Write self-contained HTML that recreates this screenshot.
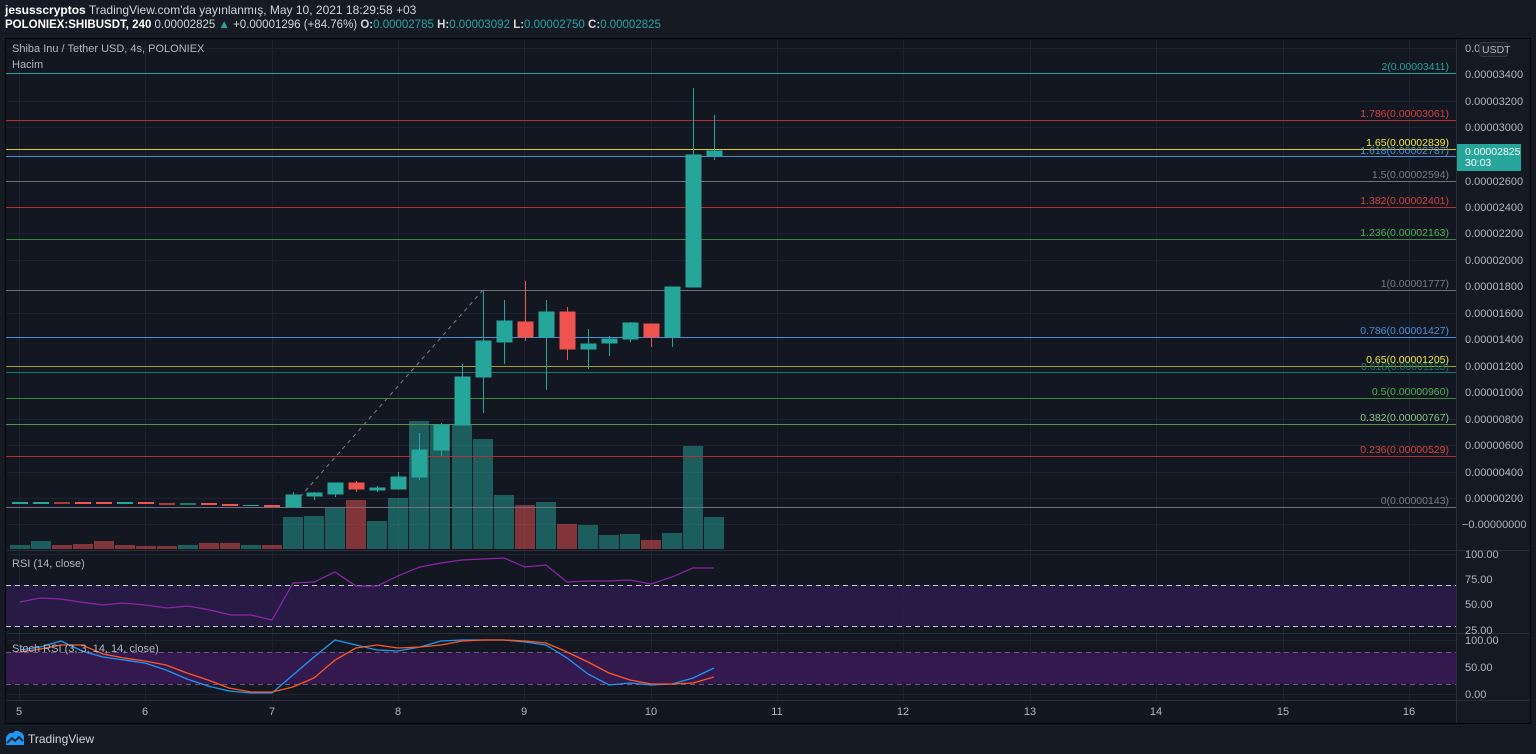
<!DOCTYPE html>
<html><head><meta charset="utf-8"><style>
html,body{margin:0;padding:0;background:#161a25;width:1536px;height:754px;overflow:hidden}
svg{display:block;font-family:"Liberation Sans",sans-serif}
</style></head><body>
<svg width="1536" height="754" xmlns="http://www.w3.org/2000/svg">
<rect width="1536" height="754" fill="#161a25"/>
<text x="5" y="14" font-size="12" fill="#d1d4dc"><tspan font-weight="bold" fill="#fff">jesusscryptos</tspan> TradingView.com'da yayınlanmış, May 10, 2021 18:29:58 +03</text>
<text x="5" y="28" font-size="11.5" fill="#d1d4dc"><tspan font-weight="bold" fill="#fff">POLONIEX:SHIBUSDT, 240</tspan> 0.00002825 <tspan fill="#26a69a">▲</tspan> +0.00001296 (+84.76%) <tspan font-weight="bold">O:</tspan><tspan fill="#26a69a">0.00002785</tspan> <tspan font-weight="bold">H:</tspan><tspan fill="#26a69a">0.00003092</tspan> <tspan font-weight="bold">L:</tspan><tspan fill="#26a69a">0.00002750</tspan> <tspan font-weight="bold">C:</tspan><tspan fill="#26a69a">0.00002825</tspan></text>
<!-- frame -->
<rect x="5.5" y="38.5" width="1525" height="685" fill="#131722" stroke="#000" stroke-width="1"/>
<rect x="1457" y="39" width="73" height="684" fill="#151924"/>
<line x1="1456.5" y1="39" x2="1456.5" y2="723" stroke="#2a2e39"/>
<!-- grid verticals -->
<g stroke="#1e222d" stroke-width="1">
<line x1="19.5" y1="39" x2="19.5" y2="700"/><line x1="145.5" y1="39" x2="145.5" y2="700"/><line x1="272.5" y1="39" x2="272.5" y2="700"/><line x1="398.5" y1="39" x2="398.5" y2="700"/><line x1="524.5" y1="39" x2="524.5" y2="700"/><line x1="651.5" y1="39" x2="651.5" y2="700"/><line x1="777.5" y1="39" x2="777.5" y2="700"/><line x1="903.5" y1="39" x2="903.5" y2="700"/><line x1="1030.5" y1="39" x2="1030.5" y2="700"/><line x1="1156.5" y1="39" x2="1156.5" y2="700"/><line x1="1283.5" y1="39" x2="1283.5" y2="700"/><line x1="1409.5" y1="39" x2="1409.5" y2="700"/>
<line x1="6" y1="48.5" x2="1456" y2="48.5"/><line x1="6" y1="101.5" x2="1456" y2="101.5"/><line x1="6" y1="127.5" x2="1456" y2="127.5"/><line x1="6" y1="154.5" x2="1456" y2="154.5"/><line x1="6" y1="233.5" x2="1456" y2="233.5"/><line x1="6" y1="260.5" x2="1456" y2="260.5"/><line x1="6" y1="313.5" x2="1456" y2="313.5"/><line x1="6" y1="419.5" x2="1456" y2="419.5"/><line x1="6" y1="445.5" x2="1456" y2="445.5"/><line x1="6" y1="472.5" x2="1456" y2="472.5"/><line x1="6" y1="498.5" x2="1456" y2="498.5"/><line x1="6" y1="524.5" x2="1456" y2="524.5"/>
<line x1="6" y1="554.5" x2="1456" y2="554.5"/><line x1="6" y1="604.5" x2="1456" y2="604.5"/><line x1="6" y1="640.5" x2="1456" y2="640.5"/><line x1="6" y1="667.5" x2="1456" y2="667.5"/><line x1="6" y1="694.5" x2="1456" y2="694.5"/>
</g>
<!-- pane separators -->
<line x1="6" y1="550.5" x2="1530" y2="550.5" stroke="#2a2e39"/>
<line x1="6" y1="633.5" x2="1530" y2="633.5" stroke="#2a2e39"/>
<line x1="6" y1="700.5" x2="1530" y2="700.5" stroke="#2a2e39"/>
<!-- volume bars -->
<g fill="rgba(38,166,154,0.5)">
<rect x="10" y="545" width="20" height="4"/><rect x="31" y="541" width="20" height="8"/><rect x="178" y="545" width="20" height="4"/><rect x="241" y="545" width="20" height="4"/>
<rect x="283" y="517" width="20" height="32"/><rect x="304" y="516" width="20" height="33"/><rect x="325" y="507" width="20" height="42"/><rect x="367" y="521" width="20" height="28"/><rect x="388" y="498" width="20" height="51"/><rect x="409" y="421" width="20" height="128"/><rect x="430" y="424" width="20" height="125"/><rect x="452" y="425" width="20" height="124"/><rect x="473" y="439" width="20" height="110"/><rect x="494" y="495" width="20" height="54"/><rect x="536" y="502" width="20" height="47"/><rect x="578" y="525" width="20" height="24"/><rect x="599" y="535" width="20" height="14"/><rect x="620" y="534" width="20" height="15"/><rect x="662" y="533" width="20" height="16"/><rect x="683" y="446" width="20" height="103"/><rect x="704" y="517" width="20" height="32"/>
</g>
<g fill="rgba(239,83,80,0.5)">
<rect x="52" y="545" width="20" height="4"/><rect x="73" y="544" width="20" height="5"/><rect x="94" y="541" width="20" height="8"/><rect x="115" y="545" width="20" height="4"/><rect x="136" y="546" width="20" height="3"/><rect x="157" y="546" width="20" height="3"/><rect x="199" y="543" width="20" height="6"/><rect x="220" y="543" width="20" height="6"/><rect x="262" y="545" width="20" height="4"/>
<rect x="346" y="500" width="20" height="49"/><rect x="515" y="505" width="20" height="44"/><rect x="557" y="524" width="20" height="25"/><rect x="641" y="540" width="20" height="9"/>
</g>
<!-- fib lines -->
<g stroke-width="1">
<line x1="6" y1="73.5" x2="1456" y2="73.5" stroke="#26a69a"/>
<line x1="6" y1="120.5" x2="1456" y2="120.5" stroke="#b2302d"/>
<line x1="6" y1="149.5" x2="1456" y2="149.5" stroke="#d4cc2a"/>
<line x1="6" y1="156.5" x2="1456" y2="156.5" stroke="#4a8fd6"/>
<line x1="6" y1="181.5" x2="1456" y2="181.5" stroke="#6f727c"/>
<line x1="6" y1="207.5" x2="1456" y2="207.5" stroke="#b2302d"/>
<line x1="6" y1="239.5" x2="1456" y2="239.5" stroke="#3d8a3f"/>
<line x1="6" y1="290.5" x2="1456" y2="290.5" stroke="#6f727c"/>
<line x1="6" y1="337.5" x2="1456" y2="337.5" stroke="#4a8fd6"/>
<line x1="6" y1="366.5" x2="1456" y2="366.5" stroke="#a39f22"/>
<line x1="6" y1="372.5" x2="1456" y2="372.5" stroke="#117a70"/>
<line x1="6" y1="398.5" x2="1456" y2="398.5" stroke="#3d8a3f"/>
<line x1="6" y1="424.5" x2="1456" y2="424.5" stroke="#5d8f4a"/>
<line x1="6" y1="456.5" x2="1456" y2="456.5" stroke="#b2302d"/>
<line x1="6" y1="507.5" x2="1456" y2="507.5" stroke="#6f727c"/>
</g>
<g font-size="10.5" text-anchor="end">
<text x="1449" y="70" fill="#26a69a">2(0.00003411)</text>
<text x="1449" y="117" fill="#d0403d">1.786(0.00003061)</text>
<text x="1449" y="146" fill="#f0e83a">1.65(0.00002839)</text>
<text x="1449" y="154" fill="#4a8fd6">1.618(0.00002787)</text>
<text x="1449" y="178" fill="#787b86">1.5(0.00002594)</text>
<text x="1449" y="204" fill="#d0403d">1.382(0.00002401)</text>
<text x="1449" y="236" fill="#4caf50">1.236(0.00002163)</text>
<text x="1449" y="287" fill="#787b86">1(0.00001777)</text>
<text x="1449" y="334" fill="#4a8fd6">0.786(0.00001427)</text>
<text x="1449" y="363" fill="#f0e83a">0.65(0.00001205)</text>
<text x="1449" y="370" fill="#117a70">0.618(0.00001153)</text>
<text x="1449" y="395" fill="#4caf50">0.5(0.00000960)</text>
<text x="1449" y="421" fill="#81c784">0.382(0.00000767)</text>
<text x="1449" y="453" fill="#d0403d">0.236(0.00000529)</text>
<text x="1449" y="504" fill="#787b86">0(0.00000143)</text>
</g>
<!-- dashed trend -->
<line x1="300" y1="497" x2="483" y2="290" stroke="#787b86" stroke-dasharray="4,4"/>
<!-- early candles -->
<g>
<rect x="12" y="502" width="16" height="2" fill="#26a69a"/><rect x="33" y="502" width="16" height="2" fill="#26a69a"/><rect x="54" y="502" width="16" height="2" fill="#a83a38"/><rect x="75" y="502" width="16" height="2" fill="#ef5350"/><rect x="96" y="502" width="16" height="2" fill="#ef5350"/><rect x="117" y="502" width="16" height="2" fill="#26a69a"/><rect x="138" y="502" width="16" height="2" fill="#ef5350"/><rect x="159" y="503" width="16" height="2" fill="#a83a38"/><rect x="180" y="503" width="16" height="2" fill="#1d7a70"/><rect x="201" y="503" width="16" height="2" fill="#ef5350"/><rect x="222" y="504" width="16" height="2" fill="#ef5350"/><rect x="243" y="505" width="16" height="1" fill="#26a69a"/><rect x="264" y="505" width="16" height="2" fill="#ef5350"/>
</g>
<!-- candles -->
<g stroke-width="1">
<g stroke="#26a69a" fill="#26a69a">
<line x1="293.5" y1="492" x2="293.5" y2="507"/><rect x="286" y="495" width="15" height="12"/>
<line x1="314.5" y1="492" x2="314.5" y2="500"/><rect x="307" y="493" width="15" height="3"/>
<line x1="335.5" y1="483" x2="335.5" y2="497"/><rect x="328" y="483" width="15" height="11"/>
<line x1="377.5" y1="486" x2="377.5" y2="492"/><rect x="370" y="488" width="15" height="2"/>
<line x1="398.5" y1="472" x2="398.5" y2="489"/><rect x="391" y="477" width="15" height="12"/>
<line x1="419.5" y1="433" x2="419.5" y2="480"/><rect x="412" y="450" width="15" height="27"/>
<line x1="441.5" y1="423" x2="441.5" y2="456"/><rect x="434" y="425" width="15" height="25"/>
<line x1="462.5" y1="364" x2="462.5" y2="425"/><rect x="455" y="377" width="15" height="48"/>
<line x1="483.5" y1="290" x2="483.5" y2="413"/><rect x="476" y="341" width="15" height="36"/>
<line x1="504.5" y1="300" x2="504.5" y2="364"/><rect x="497" y="321" width="15" height="21"/>
<line x1="546.5" y1="300" x2="546.5" y2="390"/><rect x="539" y="312" width="15" height="25"/>
<line x1="588.5" y1="329" x2="588.5" y2="369"/><rect x="581" y="344" width="15" height="5"/>
<line x1="609.5" y1="336" x2="609.5" y2="356"/><rect x="602" y="339" width="15" height="4"/>
<line x1="630.5" y1="322" x2="630.5" y2="342"/><rect x="623" y="323" width="15" height="16"/>
<line x1="672.5" y1="287" x2="672.5" y2="347"/><rect x="665" y="287" width="15" height="50"/>
<line x1="693.5" y1="88" x2="693.5" y2="287"/><rect x="686" y="155" width="15" height="132"/>
<line x1="714.5" y1="115" x2="714.5" y2="160"/><rect x="707" y="151" width="15" height="5"/>
</g>
<g stroke="#ef5350" fill="#ef5350">
<line x1="356.5" y1="481" x2="356.5" y2="492"/><rect x="349" y="483" width="15" height="6"/>
<line x1="525.5" y1="281" x2="525.5" y2="341"/><rect x="518" y="322" width="15" height="15"/>
<line x1="567.5" y1="307" x2="567.5" y2="360"/><rect x="560" y="312" width="15" height="37"/>
<line x1="651.5" y1="324" x2="651.5" y2="347"/><rect x="644" y="324" width="15" height="13"/>
</g>
</g>
<text x="12" y="52" font-size="11" fill="#b2b5be">Shiba Inu / Tether USD, 4s, POLONIEX</text>
<text x="12" y="68" font-size="11" fill="#b2b5be">Hacim</text>
<!-- price axis -->
<g font-size="11" fill="#b2b5be">
<text x="1465" y="52">0.0</text>
<text x="1465" y="78">0.00003400</text><text x="1465" y="105">0.00003200</text><text x="1465" y="131">0.00003000</text><text x="1465" y="185">0.00002600</text><text x="1465" y="211">0.00002400</text><text x="1465" y="237">0.00002200</text><text x="1465" y="264">0.00002000</text><text x="1465" y="290">0.00001800</text><text x="1465" y="317">0.00001600</text><text x="1465" y="343">0.00001400</text><text x="1465" y="370">0.00001200</text><text x="1465" y="396">0.00001000</text><text x="1465" y="423">0.00000800</text><text x="1465" y="449">0.00000600</text><text x="1465" y="476">0.00000400</text><text x="1465" y="502">0.00000200</text><text x="1462" y="528">−0.00000000</text>
<text x="1465" y="558">100.00</text><text x="1465" y="583">75.00</text><text x="1465" y="608">50.00</text><text x="1465" y="634">25.00</text>
<text x="1465" y="644">100.00</text><text x="1465" y="671">50.00</text><text x="1465" y="698">0.00</text>
</g>
<rect x="1479.5" y="42.5" width="28" height="14" rx="3" fill="#1e222d" stroke="#363a45"/>
<text x="1482" y="53" font-size="10.5" fill="#b2b5be">USDT</text>
<rect x="1457" y="144" width="64" height="27" fill="#26a69a"/>
<text x="1465" y="155" font-size="10.5" fill="#fff">0.00002825</text>
<text x="1465" y="166" font-size="10.5" fill="#fff">30:03</text>
<!-- RSI pane -->
<rect x="6" y="585" width="1450" height="41" fill="#2a1c4a" opacity="0.9"/>
<line x1="6" y1="585.5" x2="1456" y2="585.5" stroke="#c8cad0" stroke-dasharray="5,4"/>
<line x1="6" y1="626.5" x2="1456" y2="626.5" stroke="#c8cad0" stroke-dasharray="5,4"/>
<polyline fill="none" stroke="#8e24aa" stroke-width="1.2" points="20,602 40,598 60,599 80,602 103,605 123,603 145,605 167,608 188,606 210,610 231,615 251,615 272,620 293,583 314,582 335,572 356,586 377,586 400,575 420,567 441,563 462,560 483,559 504,558 525,567 546,565 567,582 588,581 609,581 630,580 651,584 672,577 693,568 714,568"/>
<text x="12" y="567" font-size="11" fill="#b2b5be">RSI (14, close)</text>
<!-- Stoch pane -->
<rect x="6" y="652" width="1450" height="32" fill="#34194f"/>
<line x1="6" y1="652.5" x2="1456" y2="652.5" stroke="#6a5a80" stroke-dasharray="5,4"/>
<line x1="6" y1="684.5" x2="1456" y2="684.5" stroke="#6a5a80" stroke-dasharray="5,4"/>
<polyline fill="none" stroke="#2196f3" stroke-width="1.3" points="20,650 40,647 61,641 82,651 103,657 124,660 145,663 166,670 187,679 208,686 229,691 251,693 272,693 293,675 314,657 335,640 356,645 377,650 398,651 420,647 441,641 462,640 483,640 504,640 525,642 546,645 567,658 588,674 609,685 630,683 651,685 672,684 693,678 714,668"/>
<polyline fill="none" stroke="#ff5722" stroke-width="1.3" points="20,652 40,649 61,645 82,645 103,654 124,658 145,661 166,665 187,673 208,680 229,688 251,692 272,692 293,687 314,678 335,660 356,648 377,645 398,648 420,647 441,645 462,641 483,640 504,640 525,641 546,643 567,652 588,662 609,673 630,680 651,684 672,684 693,683 714,677"/>
<text x="12" y="652" font-size="11" fill="#b2b5be">Stoch RSI (3, 3, 14, 14, close)</text>
<!-- time axis -->
<g font-size="11" fill="#b2b5be" text-anchor="middle">
<text x="19" y="715">5</text><text x="145" y="715">6</text><text x="272" y="715">7</text><text x="398" y="715">8</text><text x="524" y="715">9</text><text x="651" y="715">10</text><text x="777" y="715">11</text><text x="903" y="715">12</text><text x="1030" y="715">13</text><text x="1156" y="715">14</text><text x="1283" y="715">15</text><text x="1409" y="715">16</text>
</g>
<!-- footer logo -->
<path d="M6,745 L6,738 Q8,732 13,733 Q16,729 20,732 Q24,733 24,738 L24,745 Z" fill="#2196f3"/>
<path d="M7,743 L12,738 L15,741 L19,737 L23,741" fill="none" stroke="#131722" stroke-width="1.6"/>
<text x="28" y="743" font-size="12" fill="#d1d4dc">TradingView</text>
</svg>
</body></html>
